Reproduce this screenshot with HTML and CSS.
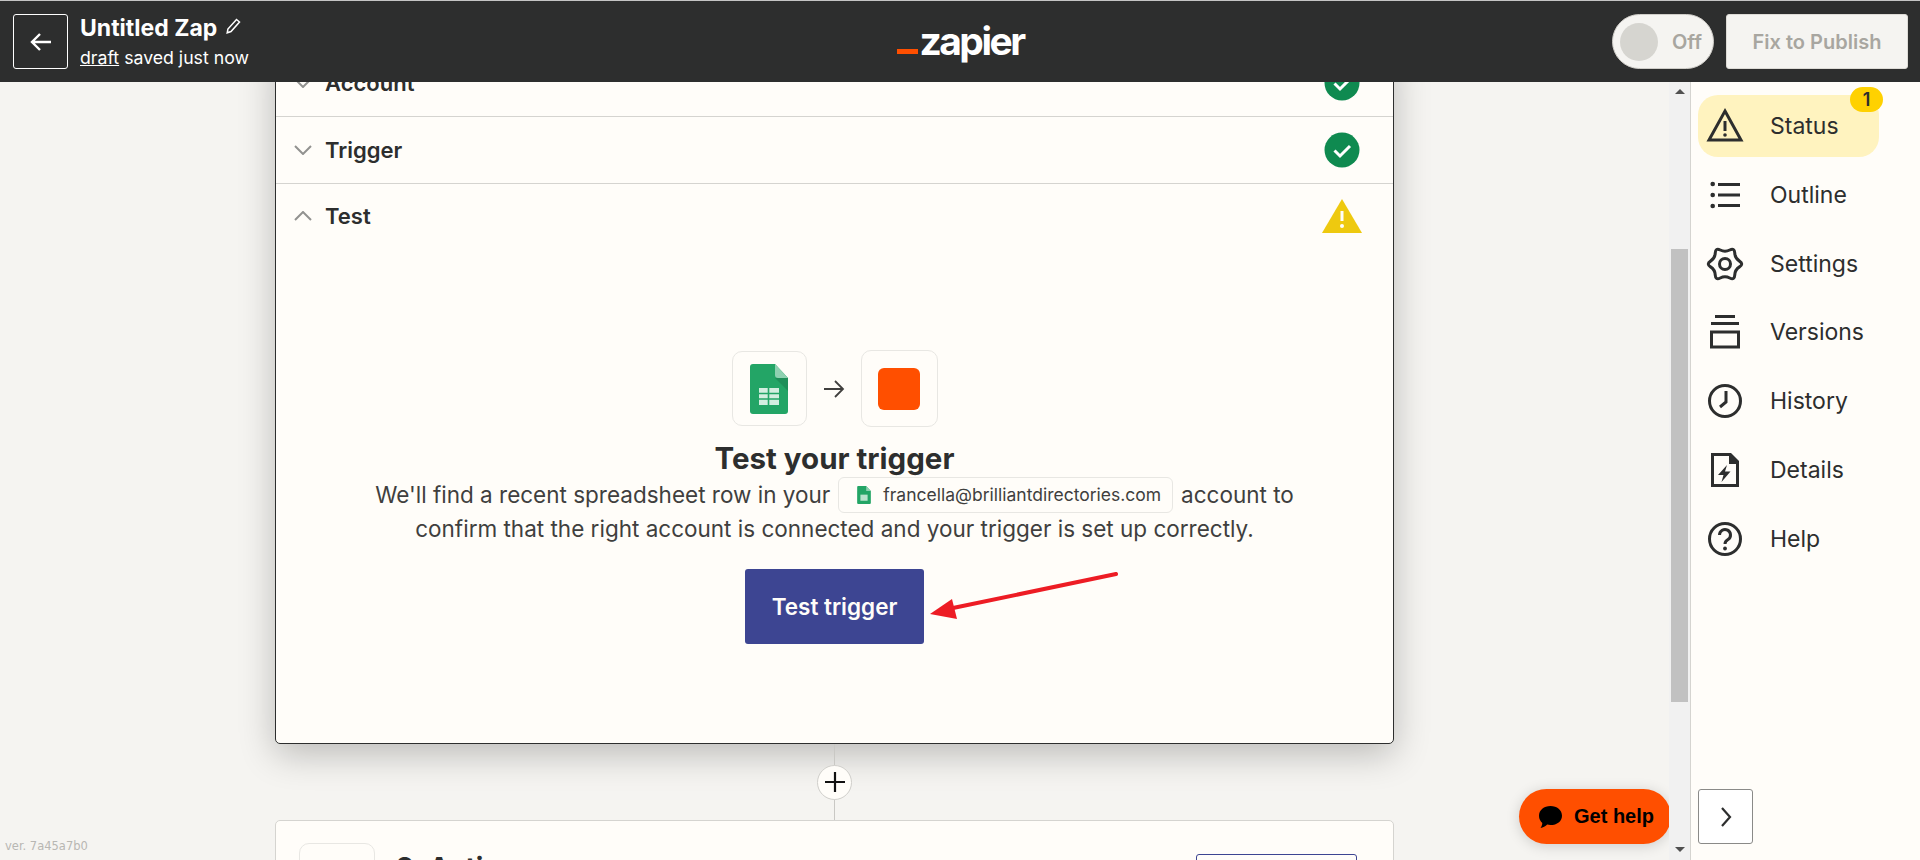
FILE: index.html
```html
<!DOCTYPE html>
<html lang="en">
<head>
    <meta charset="UTF-8">
    <meta name="viewport" content="width=device-width, initial-scale=1.0">
    <title>Untitled Zap</title>
    <link rel="stylesheet" href="styles.css">
</head>
<body>

<div class="app">
    <header class="topbar">
        <div class="topbar-left">
            <button class="back-btn">
                <svg width="24" height="24" viewBox="0 0 24 24"><path d="M22 12H3M11 4l-8 8 8 8" fill="none" stroke="#fff" stroke-width="2.4"/></svg>
            </button>
            <div>
                <div class="zap-title">Untitled Zap
                    <svg class="pencil" width="16" height="16" viewBox="0 0 16 16"><path d="M11.5 1.5l3 2.500-8.500 9.500-3.800 1.300.7-3.800z" fill="none" stroke="#fff" stroke-width="1.500"/></svg>
                </div>
                <div class="zap-status"><a href="#">draft</a> saved just now</div>
            </div>
        </div>
        <div class="logo"><span class="logo-dash"></span><span class="logo-text">zapier</span></div>
        <div class="topbar-right">
            <div class="toggle"><span class="toggle-knob"></span><span class="toggle-label">Off</span></div>
            <button class="publish-btn">Fix to Publish</button>
        </div>
    </header>

    <div class="workspace">
        <main class="canvas">
            <section class="step-card">
                <div class="step-row">
                    <svg class="chevron" width="18" height="10" viewBox="0 0 18 10"><path d="M1 1l8 8 8-8"/></svg>
                    <span class="step-name">Account</span>
                    <svg class="status-icon" width="36" height="36" viewBox="0 0 36 36"><circle cx="18" cy="18" r="17.500" fill="#0f8a50"/><path d="M10.500 18.500l5.500 5.500 10-10" fill="none" stroke="#fff" stroke-width="3"/></svg>
                </div>
                <div class="step-row">
                    <svg class="chevron" width="18" height="10" viewBox="0 0 18 10"><path d="M1 1l8 8 8-8"/></svg>
                    <span class="step-name">Trigger</span>
                    <svg class="status-icon" width="36" height="36" viewBox="0 0 36 36"><circle cx="18" cy="18" r="17.500" fill="#0f8a50"/><path d="M10.500 18.500l5.500 5.500 10-10" fill="none" stroke="#fff" stroke-width="3"/></svg>
                </div>
                <div class="step-row step-row-open">
                    <svg class="chevron" width="18" height="10" viewBox="0 0 18 10"><path d="M1 9l8-8 8 8"/></svg>
                    <span class="step-name">Test</span>
                    <svg class="status-warn" width="40" height="34" viewBox="0 0 40 34"><path d="M20 0l20 34H0z" fill="#eec90f"/><path d="M20 12v10" stroke="#fffdf9" stroke-width="3"/><circle cx="20" cy="27" r="2" fill="#fffdf9"/></svg>
                </div>

                <div class="test-body">
                    <div class="app-flow">
                        <div class="app-tile">
                            <svg width="38" height="50" viewBox="0 0 38 50">
                                <path d="M3 0h22l13 14v33a3 3 0 0 1-3 3H3a3 3 0 0 1-3-3V3a3 3 0 0 1 3-3z" fill="#23a566"/>
                                <path d="M25 14l13 13V14z" fill="#1e8f59"/>
                                <path d="M25 0l13 14H28a3 3 0 0 1-3-3z" fill="#8ed1b1"/>
                                <path d="M9 24h20v17H9z" fill="#d3eee0"/>
                                <path d="M18.500 24v17M9 29.500h20M9 35h20" stroke="#23a566" stroke-width="1.600"/>
                            </svg>
                        </div>
                        <svg class="flow-arrow" width="22" height="22" viewBox="0 0 22 22"><path d="M1 11h19M12 3l8 8-8 8" fill="none" stroke="#403f3e" stroke-width="1.800"/></svg>
                        <div class="app-tile app-tile-big"><span class="app-square"></span></div>
                    </div>
                    <h2>Test your trigger</h2>
                    <p>We'll find a recent spreadsheet row in your<span class="account-chip">
                        <svg width="14" height="18" viewBox="0 0 38 50"><path d="M3 0h22l13 14v33a3 3 0 0 1-3 3H3a3 3 0 0 1-3-3V3a3 3 0 0 1 3-3z" fill="#23a566"/><path d="M25 0l13 14H25z" fill="#8ed1b1"/><path d="M9 24h20v17H9z" fill="#b9e3cd"/></svg>
                        francella@brilliantdirectories.com</span>account to<br>confirm that the right account is connected and your trigger is set up correctly.</p>
                    <button class="test-btn">Test trigger</button>
                </div>
            </section>

            <div class="connector"><span class="add-step">
                <svg width="20" height="20" viewBox="0 0 20 20"><path d="M10 0v20M0 10h20" stroke="#111" stroke-width="2.200"/></svg>
            </span></div>

            <section class="step-card-next">
                <div class="next-tile"></div>
                <span class="next-title">2. Action</span>
                <button class="next-btn"></button>
            </section>

            <span class="version">ver. 7a45a7b0</span>

            <svg class="annotation" width="200" height="50" viewBox="0 0 200 50">
                <path d="M187 2L24 36" stroke="#ed1c24" stroke-width="4" stroke-linecap="round"/>
                <path d="M1 42L23 27l5 20z" fill="#ed1c24"/>
            </svg>

            <button class="help-btn">
                <svg width="23" height="22" viewBox="0 0 23 22"><path d="M11.500 0C18 0 23 4 23 9.700S18 19 11.500 19c-1.200 0-2.300-.1-3.300-.4C6.500 20.300 4 21.600 1.500 22c1-1.300 1.700-3 1.800-5C1.200 15.200 0 12.700 0 9.700 0 4 5 0 11.500 0z" fill="#000"/></svg>
                Get help
            </button>
        </main>

        <div class="scrollbar">
            <span class="scroll-arrow scroll-up"></span>
            <div class="scroll-track"><div class="scroll-thumb"></div></div>
            <span class="scroll-arrow scroll-down"></span>
        </div>

        <aside class="sidebar">
            <nav class="side-nav">
                <a class="side-item side-item-active" href="#">
                    <svg width="40" height="40" viewBox="0 0 40 40"><path d="M20 5L36 34H4z" class="ico"/><path d="M20 15v10" class="ico"/><circle cx="20" cy="29" r="1.800" class="ico-fill"/></svg>
                    Status
                    <span class="badge">1</span>
                </a>
                <a class="side-item" href="#">
                    <svg width="40" height="40" viewBox="0 0 40 40"><path d="M13 9.500h22M13 20h22M13 30.500h22" class="ico"/><circle cx="7.700" cy="9" r="2.300" class="ico-fill"/><circle cx="7.700" cy="20" r="2.300" class="ico-fill"/><circle cx="7.700" cy="31" r="2.300" class="ico-fill"/></svg>
                    Outline
                </a>
                <a class="side-item" href="#">
                    <svg width="40" height="40" viewBox="0 0 40 40"><path d="M34.480 17.120Q39 20 34.480 22.880Q29.960 25.750 29.730 31.100Q29.500 36.450 24.750 33.980Q20 31.500 15.250 33.980Q10.500 36.450 10.270 31.100Q10.040 25.750 5.520 22.880Q1 20 5.520 17.120Q10.040 14.250 10.270 8.900Q10.500 3.550 15.250 6.020Q20 8.500 24.750 6.020Q29.500 3.550 29.730 8.900Q29.960 14.250 34.480 17.120Z" class="ico"/><circle cx="20" cy="20" r="5.500" class="ico"/></svg>
                    Settings
                </a>
                <a class="side-item" href="#">
                    <svg width="40" height="40" viewBox="0 0 40 40"><path d="M10 4.500h20M6 11.500h28" class="ico"/><rect x="6.500" y="20" width="27" height="15" class="ico"/></svg>
                    Versions
                </a>
                <a class="side-item" href="#">
                    <svg width="40" height="40" viewBox="0 0 40 40"><circle cx="20" cy="20" r="15.500" class="ico"/><path d="M21 10v11l-6 5" class="ico"/></svg>
                    History
                </a>
                <a class="side-item" href="#">
                    <svg width="40" height="40" viewBox="0 0 40 40"><path d="M7.500 4.500h17L32.500 12.500v23h-25z" class="ico"/><path d="M24 3h2L34 11v3H24z" class="ico-fill"/><path d="M22 15l-9 10h5.500L16.500 32l9-10.500H20z" class="ico-fill"/></svg>
                    Details
                </a>
                <a class="side-item" href="#">
                    <svg width="40" height="40" viewBox="0 0 40 40"><circle cx="20" cy="20" r="15.500" class="ico"/><path d="M14.500 16a5.500 5.500 0 1 1 8.500 4.600c-2 1.300-3 2.400-3 4.400" class="ico"/><circle cx="20" cy="29.500" r="1.900" class="ico-fill"/></svg>
                    Help
                </a>
            </nav>
            <button class="collapse-btn">
                <svg width="12" height="20" viewBox="0 0 12 20"><path d="M2 1l8 9-8 9" fill="none" stroke="#2d2e2e" stroke-width="2.200"/></svg>
            </button>
        </aside>
    </div>
</div>

</body>
</html>
```

FILE: styles.css
```css
* {
    box-sizing: border-box;
}

html, body {
    margin: 0;
    height: 100%;
    overflow: hidden;
}

body {
    font-family: 'Inter', 'Liberation Sans', sans-serif;
    background-color: #f5f4f1;
    color: #2d2e2e;
}

button {
    font-family: inherit;
    cursor: pointer;
}

.app {
    display: flex;
    flex-direction: column;
    height: 860px;
}

/* top bar */

.topbar {
    display: grid;
    grid-template-columns: 1fr auto 1fr;
    align-items: center;
    flex: 0 0 82px;
    padding: 0 12px 0 13px;
    background-color: #2d2e2e;
    border-top: 1px solid #c4c4c4;
    color: #fff;
    position: relative;
    z-index: 2;
}

.topbar-left {
    display: flex;
    align-items: center;
    gap: 12px;
}

.back-btn {
    display: flex;
    align-items: center;
    justify-content: center;
    width: 55px;
    height: 55px;
    padding: 0;
    background: none;
    border: 1px solid #fff;
    border-radius: 3px;
}

.zap-title {
    display: flex;
    align-items: center;
    gap: 8px;
    font-size: 23px;
    font-weight: 700;
    line-height: 30px;
}

.pencil {
    margin-top: -5px;
}

.zap-status {
    font-size: 17.7px;
    line-height: 24px;
    margin-top: 3px;
}

.zap-status a {
    color: #fff;
}

.logo {
    display: flex;
    align-items: flex-end;
    height: 44px;
    margin-top: -2px;
    gap: 1px;
}

.logo-dash {
    width: 21px;
    height: 5px;
    margin-bottom: 9px;
    background-color: #ff4f00;
}

.logo-text {
    font-size: 39px;
    font-weight: 700;
    line-height: 44px;
    letter-spacing: -2.5px;
}

.topbar-right {
    display: flex;
    justify-content: flex-end;
    gap: 12px;
}

.toggle {
    display: flex;
    align-items: center;
    width: 102px;
    height: 55px;
    padding-left: 7px;
    background-color: #f5f4f1;
    border: 1px solid #cfcdc8;
    border-radius: 28px;
}

.toggle-knob {
    width: 38px;
    height: 38px;
    border-radius: 50%;
    background-color: #d6d5d0;
}

.toggle-label {
    margin-left: 14px;
    font-size: 20px;
    font-weight: 600;
    color: #a8a6a0;
}

.publish-btn {
    width: 182px;
    height: 55px;
    background-color: #f5f4f1;
    border: 1px solid #dddbd6;
    border-radius: 3px;
    font-size: 20px;
    font-weight: 600;
    color: #a8a6a0;
}

/* main area */

.workspace {
    display: flex;
    flex: 1;
    min-height: 0;
}

.canvas {
    flex: 1;
    position: relative;
    overflow: hidden;
    padding: 0 275px;
}

.step-card {
    width: 1119px;
    height: 695px;
    margin-top: -33px;
    background-color: #fffdf9;
    border: 1px solid #2d2e2e;
    border-radius: 5px;
    box-shadow: 0 10px 36px rgba(0, 0, 0, 0.24);
}

.step-row {
    display: flex;
    align-items: center;
    height: 67px;
    padding: 0 33px 0 18px;
    border-bottom: 1px solid #d5d4d0;
}

.step-row-open {
    height: 64px;
    border-bottom: 0;
}

.chevron {
    fill: none;
    stroke: #929290;
    stroke-width: 2;
}

.step-name {
    flex: 1;
    margin-left: 13px;
    font-size: 22px;
    font-weight: 600;
}

.status-warn {
    margin-right: -2px;
}

.test-body {
    display: flex;
    flex-direction: column;
    align-items: center;
    padding-top: 102px;
}

.app-flow {
    display: flex;
    align-items: center;
    height: 77px;
}

.app-tile {
    display: flex;
    align-items: center;
    justify-content: center;
    width: 75px;
    height: 75px;
    background-color: #fffdf9;
    border: 1px solid #e8e7e3;
    border-radius: 10px;
}

.app-tile-big {
    width: 77px;
    height: 77px;
}

.app-square {
    width: 42px;
    height: 42px;
    border-radius: 6px;
    background-color: #ff4f00;
}

.flow-arrow {
    margin: 0 16px;
}

.test-body h2 {
    margin: 14px 0 0;
    font-size: 29.5px;
    font-weight: 700;
    line-height: 34px;
}

.test-body p {
    margin: 3px 0 0;
    font-size: 22.5px;
    line-height: 34px;
    text-align: center;
    color: #403f3e;
}

.account-chip {
    display: inline-flex;
    align-items: center;
    gap: 12px;
    height: 36px;
    margin: -1px 8px;
    padding: 0 11px 0 18px;
    border: 1px solid #e8e7e3;
    border-radius: 6px;
    font-size: 17.5px;
    vertical-align: top;
}

.test-btn {
    width: 179px;
    height: 75px;
    margin-top: 23px;
    background-color: #3d4592;
    border: 0;
    border-radius: 3px;
    color: #fffdf9;
    font-size: 22.5px;
    font-weight: 600;
}

.connector {
    display: flex;
    align-items: center;
    justify-content: center;
    width: 1119px;
    height: 76px;
    background: linear-gradient(#c9c8c4, #c9c8c4) center / 1px 100% no-repeat;
}

.add-step {
    display: flex;
    align-items: center;
    justify-content: center;
    width: 35px;
    height: 35px;
    background-color: #fffdf9;
    border: 1px solid #d0cfcb;
    border-radius: 50%;
}

.step-card-next {
    display: flex;
    align-items: flex-start;
    width: 1119px;
    height: 120px;
    padding: 22px 36px 0 23px;
    background-color: #fffdf9;
    border: 1px solid #d5d4d0;
    border-radius: 5px;
}

.next-tile {
    width: 76px;
    height: 76px;
    border: 1px solid #e8e7e3;
    border-radius: 10px;
}

.next-title {
    flex: 1;
    margin-left: 21px;
    font-size: 28px;
    font-weight: 700;
    line-height: 34px;
    margin-top: 8px;
}

.next-btn {
    width: 161px;
    height: 50px;
    margin-top: 11px;
    background: none;
    border: 1px solid #3d4592;
    border-radius: 3px;
}

.version {
    position: absolute;
    left: 5px;
    bottom: 7px;
    font-family: 'DejaVu Sans', sans-serif;
    font-size: 11.5px;
    color: #b8b7b3;
}

.annotation {
    position: absolute;
    left: 929px;
    top: 490px;
}

.help-btn {
    position: absolute;
    left: 1519px;
    top: 707px;
    display: flex;
    align-items: center;
    gap: 12px;
    width: 152px;
    height: 55px;
    padding: 0 0 0 20px;
    background-color: #ff4f00;
    border: 0;
    border-radius: 28px;
    box-shadow: 0 2px 14px rgba(0, 0, 0, 0.16);
    font-family: 'Liberation Sans', sans-serif;
    font-size: 20px;
    font-weight: 700;
    color: #000;
}

/* scrollbar */

.scrollbar {
    display: flex;
    flex-direction: column;
    align-items: center;
    flex: 0 0 21px;
    background-color: #f1f1f1;
}

.scroll-arrow {
    flex: 0 0 auto;
    width: 0;
    height: 0;
    border-left: 5px solid transparent;
    border-right: 5px solid transparent;
}

.scroll-up {
    margin-top: 7px;
    border-bottom: 5px solid #505050;
}

.scroll-down {
    margin-bottom: 8px;
    border-top: 5px solid #505050;
}

.scroll-track {
    flex: 1;
    width: 17px;
}

.scroll-thumb {
    height: 453px;
    margin-top: 155px;
    background-color: #c1c1c1;
}

/* right sidebar */

.sidebar {
    display: flex;
    flex-direction: column;
    flex: 0 0 230px;
    padding: 13px 0 16px 7px;
    background-color: #fffdf9;
    border-left: 1px solid #d5d4d0;
}

.side-nav {
    display: flex;
    flex-direction: column;
    gap: 6.8px;
}

.side-item {
    display: flex;
    align-items: center;
    gap: 25px;
    position: relative;
    width: 181px;
    height: 62px;
    padding-left: 7px;
    border-radius: 20px;
    font-size: 23px;
    color: #2d2e2e;
    text-decoration: none;
}

.side-item-active {
    background-color: #fff3bf;
}

.ico {
    fill: none;
    stroke: #2d2e2e;
    stroke-width: 3;
}

.ico-fill {
    fill: #2d2e2e;
}

.badge {
    position: absolute;
    top: -8px;
    right: -4px;
    width: 33px;
    height: 25px;
    border-radius: 13px;
    background-color: #ffd100;
    font-size: 18px;
    font-weight: 600;
    line-height: 25px;
    text-align: center;
}

.collapse-btn {
    display: flex;
    align-items: center;
    justify-content: center;
    width: 55px;
    height: 55px;
    margin-top: auto;
    padding: 0;
    background-color: #fff;
    border: 1px solid #8a8a88;
    border-radius: 3px;
}
```
